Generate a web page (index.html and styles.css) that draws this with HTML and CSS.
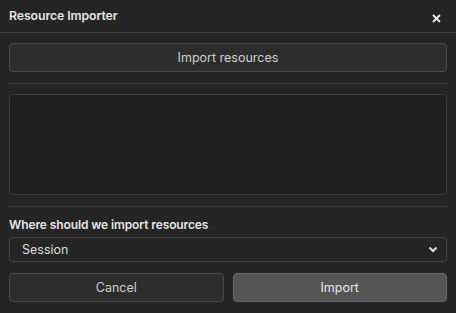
FILE: index.html
```html
<!DOCTYPE html>
<html>
<head>
<meta charset="utf-8">
<link rel="stylesheet" href="styles.css">
</head>
<body>
<div class="dialog">
  <div class="header">
    <span class="title">Resource Importer</span>
    <svg class="close" width="9" height="9" viewBox="0 0 9 9"><path d="M1 1 L8 8 M8 1 L1 8" stroke="#ececec" stroke-width="1.8"/></svg>
  </div>
  <div class="content">
    <button class="btn wide">Import resources</button>
    <div class="sep"></div>
    <textarea class="area"></textarea>
    <div class="sep"></div>
    <div class="label">Where should we import resources</div>
    <div class="select">
      <span>Session</span>
      <svg width="10" height="7" viewBox="0 0 10 7"><path d="M1.5 1.5 L5 5 L8.5 1.5" fill="none" stroke="#e0e0e0" stroke-width="2"/></svg>
    </div>
    <div class="actions">
      <button class="btn">Cancel</button>
      <button class="btn primary">Import</button>
    </div>
  </div>
</div>
</body>
</html>
```
FILE: styles.css
```css
html, body { margin: 0; padding: 0; }
body {
  background: #252525;
  font-family: Inter, "Noto Sans", sans-serif;
  color: #dcdcdc;
  width: 456px;
  height: 313px;
  overflow: hidden;
}
.header {
  height: 32px;
  border-bottom: 1px solid #3a3a3a;
  display: flex;
  align-items: center;
  justify-content: space-between;
  padding: 0 15px 0 9px;
}
.title { font-weight: 600; font-size: 12.3px; color: #e6e6e6; letter-spacing: -0.1px; margin-top: -2px; }
.close { margin-top: 4px; }
.content {
  padding: 10px 9px 0 9px;
  display: flex;
  flex-direction: column;
}
.btn {
  height: 29px;
  background: #2d2d2d;
  border: 1px solid #484848;
  border-radius: 4px;
  color: #cfcfcf;
  font-family: inherit;
  font-size: 12.5px;
  padding: 0;
}
.sep { height: 1px; background: #3a3a3a; margin: 11px 0 10px 0; }
.area {
  height: 101px;
  box-sizing: border-box;
  background: #1f1f1f;
  border: 1px solid #3c3c3c;
  border-radius: 4px;
  resize: none;
  margin: 0;
}
.label { font-weight: 600; font-size: 12px; line-height: 16px; color: #e6e6e6; margin-top: 0; letter-spacing: -0.1px; }
.select {
  margin-top: 4px;
  height: 25px;
  box-sizing: border-box;
  border: 1px solid #444;
  border-radius: 4px;
  display: flex;
  align-items: center;
  justify-content: space-between;
  padding: 0 8px 0 12px;
  font-size: 12.5px;
  color: #dcdcdc;
}
.actions {
  margin-top: 11px;
  display: grid;
  grid-template-columns: 1fr 1fr;
  gap: 9px;
}
.btn.primary { background: #555; border-color: #666; color: #e8e8e8; }
```
